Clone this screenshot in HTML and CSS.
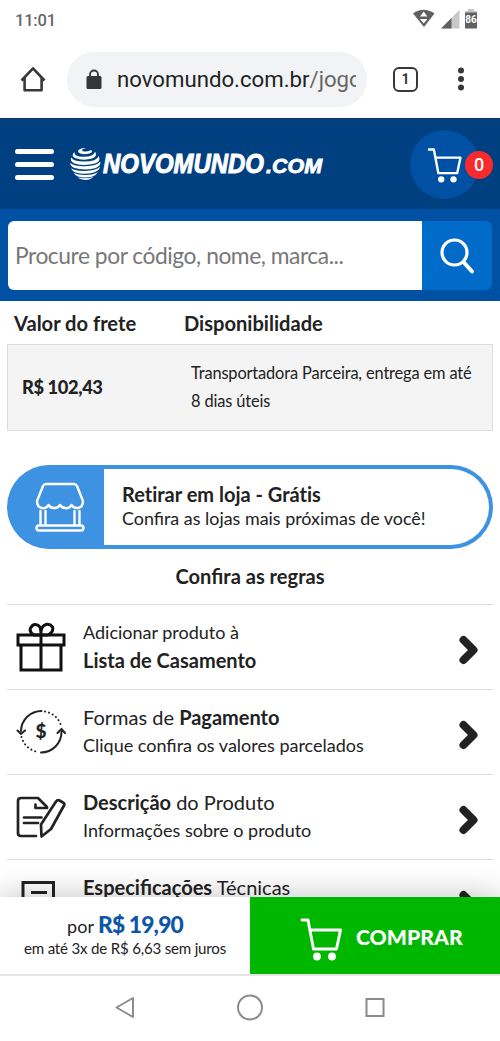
FILE: index.html
```html
<!DOCTYPE html>
<html lang="pt-BR">
<head>
<meta charset="utf-8">
<meta name="viewport" content="width=device-width, initial-scale=1">
<title>Novo Mundo</title>
<link rel="stylesheet" href="styles.css">
</head>
<body>
<div class="status">
  <span class="clock">11:01</span>
  <svg class="status-icons" viewBox="0 0 68 24" width="68" height="24">
    <path d="M1 5.500Q11.500-2 22.500 5.500L12 19Z" fill="#606060"/>
    <path d="M8 8.500 11.700 3.500 15.400 8.500ZM8 11H15.400L11.700 15.500Z" fill="#fff"/>
    <path d="M47.500 2V20.500H29Z" fill="#c8c8c8"/>
    <path d="M39.500 10V20.500H29Z" fill="#606060"/>
    <path d="M56 1H62V3H65V8H53V3H56Z" fill="#c4c4c4"/>
    <path d="M53 4.500H65V20.500H53Z" fill="#606060"/>
    <text class="battery" x="59" y="15" text-anchor="middle">86</text>
  </svg>
</div>
<div class="browser">
  <svg class="home" viewBox="0 0 28 28" width="28" height="28" fill="none" stroke="#37383b" stroke-width="2.600"><path d="M2.500 15.500 14 3.300 25.500 15.500M5.600 12.500V25.300H22.600V12.500" stroke-linejoin="round"/></svg>
  <div class="url">
    <svg viewBox="0 0 16 21" width="16" height="21"><rect x=".5" y="7" width="15" height="13" rx="1.500" fill="#35363a"/><path d="M4 8V5.500a4 4 0 0 1 8 0V8" fill="none" stroke="#35363a" stroke-width="1.800"/></svg>
    <span class="address">novomundo.com.br<span class="path">/jogos</span></span>
  </div>
  <span class="tabs">1</span>
  <svg class="dots" viewBox="0 0 8 26" width="8" height="26" fill="#37383b"><circle cx="4" cy="4.500" r="3"/><circle cx="4" cy="13" r="3"/><circle cx="4" cy="21.500" r="3"/></svg>
</div>
<header class="header">
  <div class="burger"><i></i><i></i><i></i></div>
  <svg class="logo" viewBox="0 0 256 36" width="256" height="36">
    <g fill="#fff">
      <path d="M9.500 4Q13 1.500 17 2.300Q11.500 3.500 13.500 5Q17 6.500 22 4Q24.500 6 20.500 7.500Q13 9.300 9.500 6.500Q8.500 5 9.500 4Z"/>
      <path d="M5.500 6Q4.500 10.500 14.500 10.800Q25 10.800 26 5.500Q29 10.500 23 12.500Q14 15 6 12Q1.500 9.500 5.500 6Z"/>
      <path d="M2.300 11.500Q4 15.300 15 15.500Q28 15.500 29.800 10Q32 15.500 26 17.600Q15 20.500 5.500 17.400Q.5 15 2.300 11.500Z"/>
      <path d="M1.300 17Q6 20.500 16 20.200Q28 20 31.300 15.500Q32 20 26 22.200Q15 24.700 5.500 22Q1 20 1.300 17Z"/>
      <path d="M2 22.200Q7 25.200 16 24.900Q27 24.800 31 20.800Q30.500 24.500 25 26.500Q15 29 6.500 26.500Q3 25 2 22.200Z"/>
      <path d="M4.500 27Q10 29.300 16.500 29.100Q25 29 29 26Q27 29.500 23 30.700Q15 32.300 9 30.500Q6 29.300 4.500 27Z"/>
      <path d="M8.500 31.200Q16 33.500 24.500 31Q21 34 16 34Q11.500 34 8.500 31.200Z"/>
    </g>
    <text class="brand" x="34" y="27" textLength="161" lengthAdjust="spacingAndGlyphs">NOVOMUNDO</text>
    <text class="brand brand-small" x="197" y="27" textLength="56" lengthAdjust="spacingAndGlyphs">.COM</text>
  </svg>
  <div class="cart">
    <svg viewBox="0 0 42 44" width="35" height="36" fill="none" stroke="#fff" stroke-width="2.900" stroke-linecap="round" stroke-linejoin="round"><path d="M2 3H8L13.500 32H36.500L40.500 13H10"/><circle cx="17" cy="39.500" r="3.900" fill="#fff" stroke="none"/><circle cx="32" cy="39.500" r="3.900" fill="#fff" stroke="none"/></svg>
    <span class="badge">0</span>
  </div>
</header>
<div class="search">
  <div class="field"><span class="t-search">Procure por código, nome, marca...</span></div>
  <div class="go"><svg viewBox="0 0 36 38" width="36" height="38" fill="none" stroke="#fff" stroke-width="3.200" stroke-linecap="round"><circle cx="15.500" cy="15.500" r="12.500"/><path d="M24.500 25 33 34.500" stroke-width="4"/></svg></div>
</div>
<main class="content">
  <div class="ship-head"><b class="t-valor">Valor do frete</b><b class="t-disp">Disponibilidade</b></div>
  <div class="ship-row"><b class="t-price">R$ 102,43</b><span class="t-transp">Transportadora Parceira, entrega em até<br>8 dias úteis</span></div>
  <div class="pickup">
    <div class="pickup-icon"><svg viewBox="0 0 50 50" width="50" height="50" fill="none" stroke="#fff" stroke-width="2.400" stroke-linejoin="round" stroke-linecap="round"><path d="M11 2H39Q41 2 42 4L48 19Q48 25 43 26Q39 26.500 36.500 23Q34 27 30.500 26Q27 26 25 23Q22.500 26.500 19 26Q15.500 26 13.500 23Q11 27 7 26Q2 25 2 19L8 4Q9 2 11 2Z"/><path d="M5.500 29V42M10.500 29V43.500H39.500V29M44.500 29V42M4 43.500H10M40 43.500H46Q48.500 43.500 48.500 46Q48.500 48.500 46 48.500H4Q1.500 48.500 1.500 46Q1.500 43.500 4 43.500"/></svg></div>
    <div class="pickup-text"><b class="t-ret">Retirar em loja - Grátis</b><span class="t-conf">Confira as lojas mais próximas de você!</span></div>
  </div>
  <b class="rules"><span class="t-regras">Confira as regras</span></b>
  <div class="item">
    <svg viewBox="0 0 50 50" width="50" height="50" fill="none" stroke="#111" stroke-width="3"><path d="M2 13H48V23H2ZM5 23V48H45V23M25 13V48"/><path d="M25 13H18Q13 10 14.500 6Q18 0 23 4Q25 6 25 13Q24.500 6 28 3.500Q33 .5 36.500 5Q38 10 32 13Z"/></svg>
    <div class="lines"><span class="t-adic">Adicionar produto à</span><span class="t-lista"><b>Lista de Casamento</b></span></div>
    <svg class="chev" viewBox="0 0 20 30" width="20" height="30"><path d="M4.500 5 14.500 15 4.500 25"/></svg>
  </div>
  <div class="item">
    <svg viewBox="0 0 50 50" width="50" height="50" fill="none" stroke="#222" stroke-width="2" stroke-linecap="round"><path d="M5 24A20.500 20.500 0 0 1 25.500 4M45.500 25A20.500 20.500 0 0 1 25 45.500M1.500 23.500 5 27 9 23.500M41.500 26 45.500 22 49 26"/><path d="M29 4.500A20.500 20.500 0 0 1 45.500 20M5.500 30A20.500 20.500 0 0 0 22 45" stroke-dasharray=".1 4"/><text class="dollar" x="25" y="31" text-anchor="middle">$</text></svg>
    <div class="lines"><span class="t-formas">Formas de <b>Pagamento</b></span><span class="t-clique">Clique confira os valores parcelados</span></div>
    <svg class="chev" viewBox="0 0 20 30" width="20" height="30"><path d="M4.500 5 14.500 15 4.500 25"/></svg>
  </div>
  <div class="item">
    <svg viewBox="0 0 50 50" width="50" height="50" fill="none" stroke="#222" stroke-width="2.700" stroke-linejoin="round" stroke-linecap="round"><path d="M20 44H5Q2 44 2 41V9Q2 6 5 6H22L31 15V16H19.500V12.500M8 25.500H25.500M8 31H22M40 9.500Q41.500 7.500 43.500 8.500L47 10.500Q49 11.500 48 13.500L35 37L25.500 44.500L25 32.500Z"/></svg>
    <div class="lines"><span class="t-desc"><b>Descrição</b> do Produto</span><span class="t-info">Informações sobre o produto</span></div>
    <svg class="chev" viewBox="0 0 20 30" width="20" height="30"><path d="M4.500 5 14.500 15 4.500 25"/></svg>
  </div>
  <div class="item">
    <svg viewBox="0 0 50 50" width="50" height="50" fill="none" stroke="#222" stroke-width="3"><path d="M7 48V5.500H37.500V48M15 15.500H31M15 26H30M15 35H30"/></svg>
    <div class="lines"><span class="t-espec"><b>Especificações</b> Técnicas</span></div>
    <svg class="chev" viewBox="0 0 20 30" width="20" height="30"><path d="M4.500 5 14.500 15 4.500 25"/></svg>
  </div>
</main>
<div class="buybar">
  <div class="price"><div class="now"><span class="t-por">por</span><b class="t-val">R$ 19,90</b></div><span class="t-parc">em até 3x de R$ 6,63 sem juros</span></div>
  <div class="buy"><svg viewBox="0 0 42 44" width="42" height="44" fill="none" stroke="#fff" stroke-width="2.900" stroke-linecap="round" stroke-linejoin="round"><path d="M2 3H8L13.500 32H36.500L40.500 13H10"/><circle cx="17" cy="39.500" r="3.900" fill="#fff" stroke="none"/><circle cx="32" cy="39.500" r="3.900" fill="#fff" stroke="none"/></svg><b class="t-buy">COMPRAR</b></div>
</div>
<nav class="nav">
  <svg viewBox="0 0 28 28" width="28" height="28"><path d="M5.500 14.500 22 5V24Z" stroke-linejoin="round"/></svg>
  <svg viewBox="0 0 28 28" width="28" height="28"><circle cx="14" cy="14.500" r="12"/></svg>
  <svg viewBox="0 0 28 28" width="28" height="28"><path d="M5.500 6H22.500V23H5.500Z"/></svg>
</nav>
</body>
</html>
```
FILE: styles.css
```css
* { box-sizing: border-box; }
body { margin: 0; width: 500px; height: 1041px; overflow: hidden; display: flex; flex-direction: column; background: #fff; color: #222; font-family: Lato, sans-serif; font-size: 18px; }
svg { flex: none; display: block; }
span, b { white-space: nowrap; }

.status { height: 40px; padding: 0 20px 0 15px; display: flex; align-items: center; justify-content: space-between; font-family: Roboto, sans-serif; }
.clock { font-size: 16.500px; font-weight: 500; color: #666; letter-spacing: -.2px; }
.battery { font: 700 10px Roboto, sans-serif; fill: #fff; }
.browser { height: 78px; padding: 0 35px 0 19px; display: flex; align-items: center; }
.url { width: 300px; height: 55px; margin-left: 20px; padding: 0 11px 0 19px; border-radius: 28px; background: #f1f3f5; display: flex; align-items: center; gap: 15px; font: 22.200px Roboto, sans-serif; color: #222; }
.address { overflow: hidden; width: 239px; }
.path { color: #666; }
.tabs { width: 25px; height: 25px; margin-left: 26px; border: 2.500px solid #37383b; border-radius: 6px; display: flex; align-items: center; justify-content: center; font: 700 14px Roboto, sans-serif; color: #37383b; }
.dots { margin-left: auto; }

.header { height: 91px; background: #004080; border-top: 1px solid #123768; display: flex; align-items: center; padding-left: 15px; }
.burger { width: 39px; display: flex; flex-direction: column; gap: 8px; }
.burger i { height: 5px; border-radius: 3px; background: #fff; }
.logo { margin-left: 15px; }
.brand { font: italic 700 27px "Liberation Sans", sans-serif; fill: #fff; stroke: #fff; stroke-width: 1px; }
.brand-small { font-size: 20px; stroke-width: .8px; }
.cart { position: relative; width: 69px; height: 69px; margin-left: 85px; border-radius: 50%; background: #0051a3; padding: 17px 0 0 17px; }
.badge { position: absolute; left: 55px; top: 21px; width: 28px; height: 28px; border-radius: 50%; background: #f92a2d; color: #fff; display: flex; align-items: center; justify-content: center; font: 500 18px Roboto, sans-serif; }
.search { height: 92px; padding: 12px 8px 11px; background: #0050a4; display: flex; }
.field { width: 414px; height: 69px; padding: 0 0 1px 7px; border-radius: 6px 0 0 6px; background: #fff; color: #777; display: flex; align-items: center; font-size: 22.800px; letter-spacing: -.46px; }
.go { width: 70px; height: 69px; border-radius: 0 6px 6px 0; background: #006bc8; display: flex; align-items: center; justify-content: center; }

.content { height: 596px; padding: 0 7px; overflow: hidden; }
.ship-head { height: 43px; padding: 1px 0 1px 7px; display: flex; align-items: center; font-size: 20.100px; }
.t-valor { width: 170px; }
.ship-row { height: 87px; border: 1px solid #ddd; background: #f4f4f4; display: flex; align-items: center; padding: 0 0 1px 14px; }
.t-price { width: 169px; font-size: 18.300px; letter-spacing: -.4px; font-weight: 900; }
.t-transp { font-size: 16.400px; letter-spacing: -.15px; line-height: 28px; }
.pickup { height: 84px; margin-top: 34px; padding: 4px; border-radius: 42px; background: #3e92e2; overflow: hidden; display: flex; }
.pickup-icon { width: 93px; display: flex; align-items: center; padding-left: 24px; }
.pickup-text { flex: 1; background: #fff; border-radius: 0 38px 38px 0; padding: 13px 0 0 18px; display: flex; flex-direction: column; line-height: 24px; font-size: 17.900px; }
.t-ret { font-size: 20px; font-variant-ligatures: none; }
.rules { height: 54px; display: flex; align-items: center; justify-content: center; font-size: 20.100px; }
.item { height: 85px; border-top: 1px solid #ddd; padding: 0 14px 0 9px; display: flex; align-items: center; }
.rules + .item { margin-top: 1px; }
.lines { margin-left: 17px; flex: 1; align-self: stretch; display: flex; flex-direction: column; padding-top: 13px; line-height: 28px; font-size: 18px; }
.t-lista, .t-formas, .t-desc, .t-espec { font-size: 20px; }
.chev { margin-top: 6px; fill: none; stroke: #222; stroke-width: 8px; stroke-linecap: round; stroke-linejoin: round; }
.dollar { font: 900 19px Lato, sans-serif; fill: #222; stroke: none; }

.buybar { position: relative; height: 77px; display: flex; box-shadow: 0 -4px 28px rgba(0,0,0,.2); }
.price { width: 250px; background: #fff; display: flex; flex-direction: column; align-items: center; padding-top: 15px; line-height: 24px; font-size: 18px; }
.now { display: flex; align-items: baseline; gap: 4px; }
.t-val { font-size: 22.800px; letter-spacing: -.85px; font-weight: 900; color: #0d56a6; }
.t-parc { font-size: 15.100px; letter-spacing: -.2px; line-height: 20px; }
.buy { width: 250px; background: #00b700; color: #fff; display: flex; align-items: center; padding: 6px 0 0 50px; gap: 14px; }
.t-buy { font-size: 21.200px; font-weight: 900; margin-top: -3px; }
.nav { flex: 1; position: relative; background: #fff; border-top: 2px solid #e5e5e5; display: flex; justify-content: center; gap: 97px; padding-top: 17px; }
.nav svg { fill: none; stroke: #8b8b8b; stroke-width: 2px; }
```
